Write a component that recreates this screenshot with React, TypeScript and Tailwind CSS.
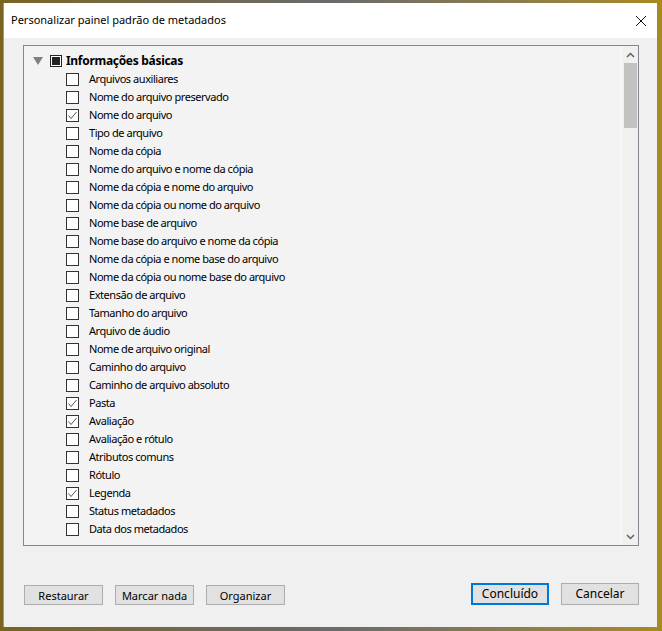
import React from 'react';

const items: { label: string; checked?: boolean }[] = [
  { label: 'Arquivos auxiliares' },
  { label: 'Nome do arquivo preservado' },
  { label: 'Nome do arquivo', checked: true },
  { label: 'Tipo de arquivo' },
  { label: 'Nome da cópia' },
  { label: 'Nome do arquivo e nome da cópia' },
  { label: 'Nome da cópia e nome do arquivo' },
  { label: 'Nome da cópia ou nome do arquivo' },
  { label: 'Nome base de arquivo' },
  { label: 'Nome base do arquivo e nome da cópia' },
  { label: 'Nome da cópia e nome base do arquivo' },
  { label: 'Nome da cópia ou nome base do arquivo' },
  { label: 'Extensão de arquivo' },
  { label: 'Tamanho do arquivo' },
  { label: 'Arquivo de áudio' },
  { label: 'Nome de arquivo original' },
  { label: 'Caminho do arquivo' },
  { label: 'Caminho de arquivo absoluto' },
  { label: 'Pasta', checked: true },
  { label: 'Avaliação', checked: true },
  { label: 'Avaliação e rótulo' },
  { label: 'Atributos comuns' },
  { label: 'Rótulo' },
  { label: 'Legenda', checked: true },
  { label: 'Status metadados' },
  { label: 'Data dos metadados' },
];

function Checkbox({ checked }: { checked?: boolean }) {
  return (
    <div className="w-[13px] h-[13px] border border-[#333] bg-white flex-none relative">
      {checked && (
        <svg className="absolute inset-0" width="11" height="11" viewBox="0 0 11 11">
          <path d="M1.5 5.5 L4 8.5 L9.5 2" fill="none" stroke="#555" strokeWidth="1" />
        </svg>
      )}
    </div>
  );
}

function Button({ children, variant }: { children: React.ReactNode; variant?: 'primary' | 'large' }) {
  if (variant === 'primary') {
    return (
      <button className="w-[78px] h-[22px] border-2 border-[#0078d7] bg-[#e1e1e1] text-[12px] text-black leading-none">
        {children}
      </button>
    );
  }
  if (variant === 'large') {
    return (
      <button className="w-[78px] h-[22px] border border-[#adadad] bg-[#e1e1e1] text-[12px] text-black leading-none">
        {children}
      </button>
    );
  }
  return (
    <button className="w-[79px] h-[20px] border border-[#adadad] bg-[#e1e1e1] text-[11px] text-black leading-none">
      {children}
    </button>
  );
}

export default function App() {
  return (
    <div
      className="w-[662px] h-[631px] bg-linear-to-r from-[#7a6420] via-[#6a6a6a] to-[#a88a1c] pt-[3px] pl-[3px] overflow-hidden"
      style={{ fontFamily: '"Noto Sans", Arial, sans-serif' }}
    >
      <div className="w-[654px] h-[624px] bg-[#f0f0f0] border-l border-[#9a9a9a] flex flex-col">
        {/* title bar */}
        <div className="h-[35px] bg-white flex items-center justify-between pl-[7px] pr-[10px]">
          <span className="text-[11px] text-black">Personalizar painel padrão de metadados</span>
          <svg width="12" height="12" viewBox="0 0 12 12">
            <path d="M1 1 L11 11 M11 1 L1 11" stroke="#111" strokeWidth="1" />
          </svg>
        </div>

        {/* list */}
        <div className="mt-[7px] ml-[19px] w-[616px] h-[501px] border border-[#828790] bg-[#f3f3f3] flex">
          <div className="flex-1 pt-[6px] text-[11px] tracking-[-0.45px] text-black">
            <div className="h-[18px] flex items-center">
              <svg className="ml-[9px]" width="10" height="9" viewBox="0 0 10 9">
                <path d="M0 0 L10 0 L5 8 Z" fill="#808080" />
              </svg>
              <div className="ml-[7px] w-[12px] h-[12px] border border-[#222] bg-white flex items-center justify-center">
                <div className="w-[8px] h-[8px] bg-[#222]" />
              </div>
              <span className="ml-[4px] font-bold text-[12px] tracking-[-0.3px]">Informações básicas</span>
            </div>
            {items.map((it) => (
              <div key={it.label} className="h-[18px] flex items-center pl-[42px]">
                <Checkbox checked={it.checked} />
                <span className="ml-[10px]">{it.label}</span>
              </div>
            ))}
          </div>
          {/* scrollbar */}
          <div className="w-[17px] border-l border-[#fafafa] bg-[#f0f0f0] flex flex-col items-center">
            <div className="h-[17px] flex items-center justify-center">
              <svg width="9" height="6" viewBox="0 0 9 6">
                <path d="M1 5 L4.5 1.5 L8 5" fill="none" stroke="#606060" strokeWidth="1.5" />
              </svg>
            </div>
            <div className="w-[13px] h-[65px] bg-[#c2c2c2]" />
            <div className="flex-1" />
            <div className="h-[17px] flex items-center justify-center">
              <svg width="9" height="6" viewBox="0 0 9 6">
                <path d="M1 1 L4.5 4.5 L8 1" fill="none" stroke="#606060" strokeWidth="1.5" />
              </svg>
            </div>
          </div>
        </div>

        {/* buttons */}
        <div className="mt-[37px] flex items-end pl-[20px] pr-[18px]">
          <div className="flex gap-[12px]">
            <Button>Restaurar</Button>
            <Button>Marcar nada</Button>
            <Button>Organizar</Button>
          </div>
          <div className="flex-1" />
          <div className="flex gap-[12px]">
            <Button variant="primary">Concluído</Button>
            <Button variant="large">Cancelar</Button>
          </div>
        </div>
      </div>
    </div>
  );
}
